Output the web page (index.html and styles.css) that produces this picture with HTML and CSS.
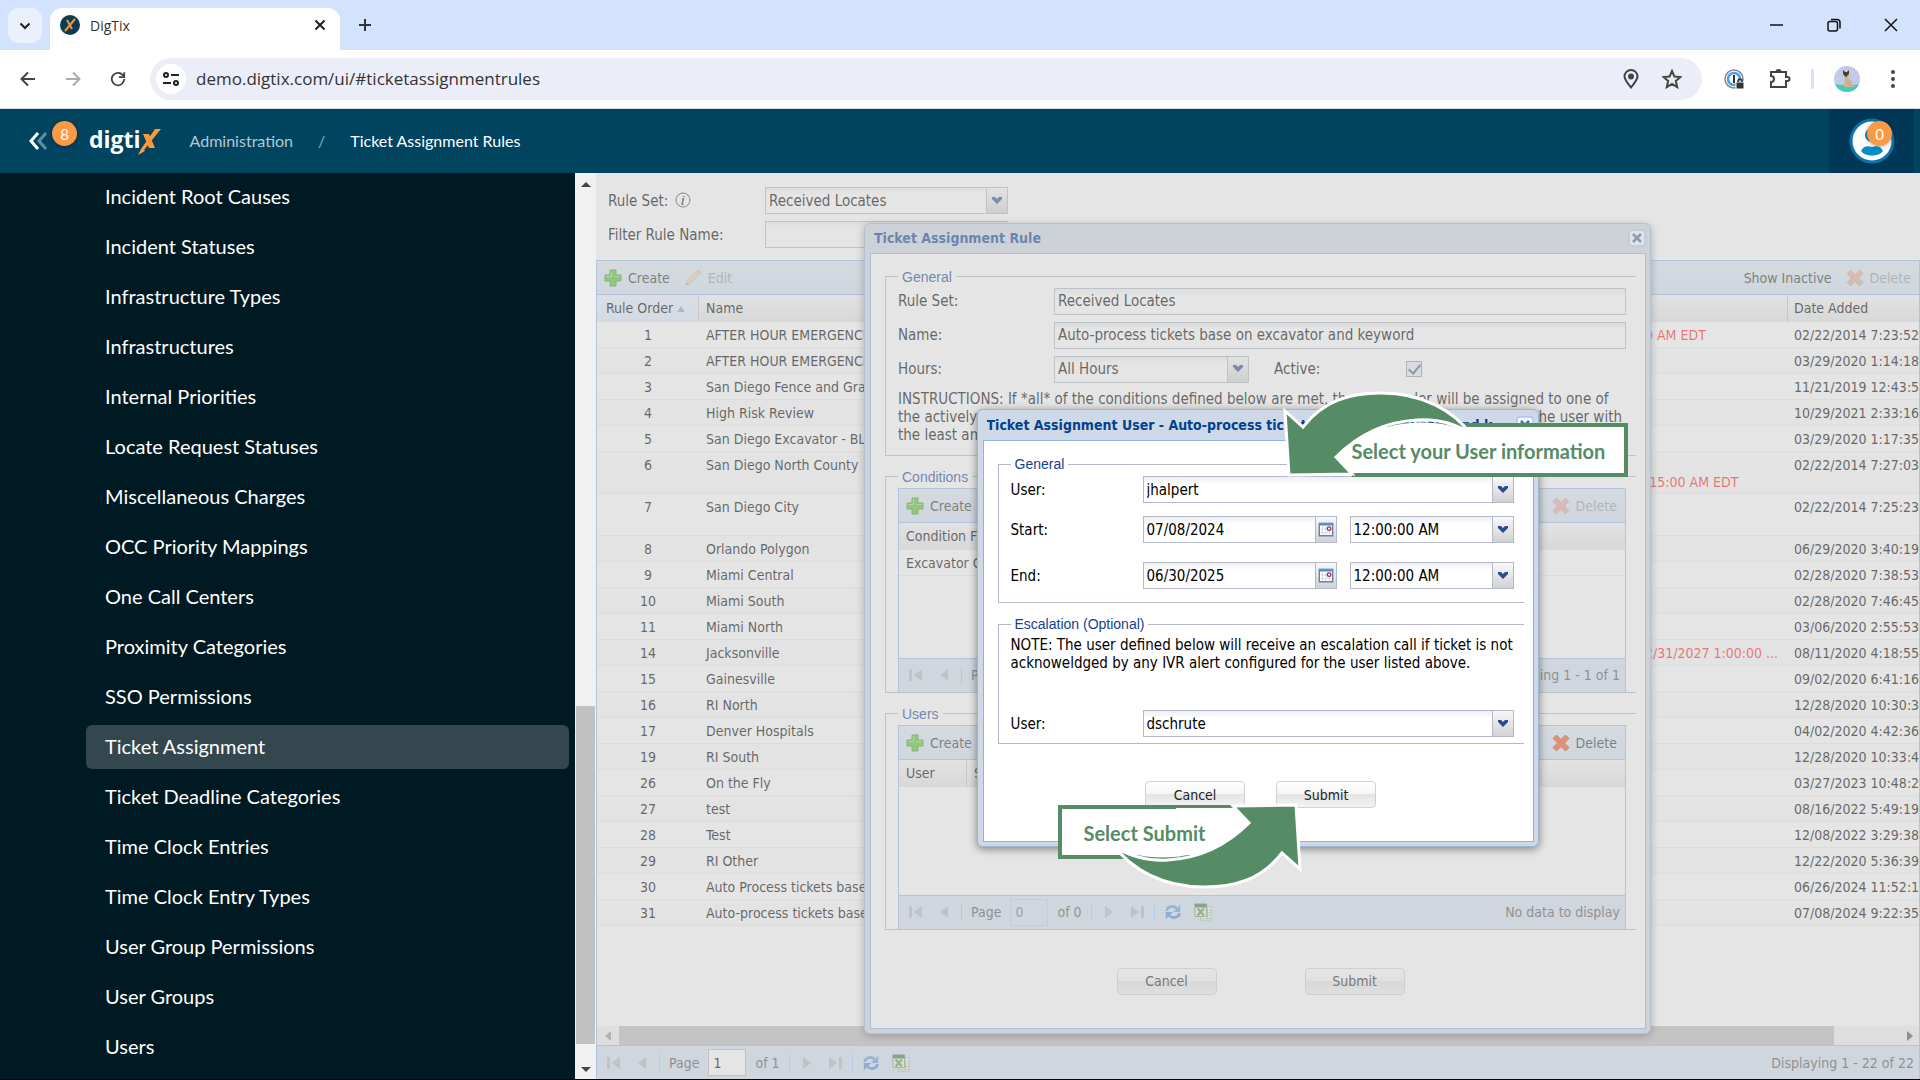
FILE: index.html
```html
<!DOCTYPE html>
<html lang="en">
<head>
  <meta charset="UTF-8" />
  <title>DigTix</title>
  <meta name="viewport" content="width=device-width, initial-scale=1.0" />
  <link rel="stylesheet" href="styles.css">
</head>
<body>
  <!-- icon sprite -->
  <svg class="sprite" aria-hidden="true">
    <symbol id="i-plus" viewBox="0 0 18 18"><path d="M6 1h6v5h5v6h-5v5H6v-5H1V6h5z" fill="#5cc22f" stroke="#3a9d2a" stroke-width="1"/><path d="M7.500 2.500v5h-5M10.500 7.500h5" stroke="#9be27a" fill="none"/></symbol>
    <symbol id="i-cross" viewBox="0 0 18 18"><path d="M4.500 1L9 5.500 13.500 1 17 4.500 12.500 9l4.500 4.500-3.500 3.500L9 12.500 4.500 17 1 13.500 5.500 9 1 4.500z" fill="#f0561b" stroke="#c94a2a" stroke-linejoin="round"/></symbol>
    <symbol id="i-pencil" viewBox="0 0 20 20"><path d="M2 18l2-6L14 2l4 3L7 16z" fill="#f1b850" stroke="#b98a4a"/><path d="M14 2l2-1 3 2-1 2z" fill="#e0483a"/><path d="M2 18l1-3 2 2z" fill="#444"/></symbol>
    <symbol id="i-first" viewBox="0 0 16 16"><path d="M1 2h3v12H1zM14 2v12L6 8z"/></symbol>
    <symbol id="i-prev" viewBox="0 0 16 16"><path d="M12 2v12L4 8z"/></symbol>
    <symbol id="i-next" viewBox="0 0 16 16"><path d="M4 2v12l8-6z"/></symbol>
    <symbol id="i-last" viewBox="0 0 16 16"><path d="M12 2h3v12h-3zM2 2v12l8-6z"/></symbol>
    <symbol id="i-refresh" viewBox="0 0 20 20"><path d="M3 9c0-5 7-7 11-3" fill="none" stroke="#5a9fe0" stroke-width="3"/><path d="M18 2v8h-8z" fill="#5a9fe0"/><path d="M17 11c0 5-7 7-11 3" fill="none" stroke="#4a90d8" stroke-width="3"/><path d="M2 18v-8h8z" fill="#4a90d8"/></symbol>
    <symbol id="i-excel" viewBox="0 0 20 20"><path d="M7 4h12v15H7z" fill="#fff" stroke="#9ab898"/><path d="M8 14h10M8 17h10M15 5v13M16 8h3M16 11h3" stroke="#8fb98c"/><path d="M1 1h13v14H1z" fill="#e4efe0" stroke="#6a9a66"/><path d="M1 1h13v4H1z" fill="#4a7a48"/><path d="M4 6l7 8M11 6l-7 8" stroke="#5c9a55" stroke-width="2.500"/></symbol>
    <symbol id="i-chev" viewBox="0 0 12 10"><path d="M1 1h3l2 2 2-2h3v2L6 8 1 3z" fill="#2b4a8f"/></symbol>
    <symbol id="i-cal" viewBox="0 0 18 18"><path d="M1.500 1.500h15v14h-15z" fill="#fff" stroke="#5a7fb5" stroke-width="1.500"/><path d="M1 1h16v3H1z" fill="#5a8fd0"/><path d="M3 8h11M3 12h11M5 5v10M9 5v10M13 9v6" stroke="#ccd4de"/><circle cx="12.500" cy="7.500" r="2" fill="#fff" stroke="#b3262a" stroke-width="1.500"/></symbol>
    <symbol id="i-x" viewBox="0 0 18 18"><rect x="1" y="1" width="16" height="16" rx="3" fill="#f4f8fd" stroke="#a9c6ee" stroke-width="1.500"/><path d="M5 5l8 8M13 5l-8 8" stroke="#4a68ab" stroke-width="2.500"/></symbol>
    <!-- curved pointer used by both callouts -->
    <symbol id="i-arrow" viewBox="0 0 200 90" overflow="visible">
      <path d="M191 29C165 14 98 10 57 53L73 68H130V32z" fill="#fff"/>
      <path d="M6 7L24 23C45-4 72-11 102-11C145-11 175 8 191 29C172 17 155 15 138 16C100 18 75 35 57 53L73 70L10 71z" fill="#558b65" stroke="#fff" stroke-width="3"/>
    </symbol>
  </svg>

  <div class="tabstrip">
    <button class="tab-search" aria-label="Search tabs"><svg width="12" height="8" viewBox="0 0 12 8"><path d="M1.500 1.500L6 6l4.500-4.500" fill="none" stroke="#1f1f1f" stroke-width="2"/></svg></button>
    <div class="tab">
      <svg class="favicon" width="20" height="20" viewBox="0 0 20 20"><circle cx="10" cy="10" r="10" fill="#0b3c55"/><path d="M15 4L5 16M7 5l5 9" stroke="#f7953a" stroke-width="2" fill="none"/></svg>
      <span class="tab-title">DigTix</span>
      <button class="tab-close" aria-label="Close tab"><svg width="12" height="12" viewBox="0 0 12 12"><path d="M1.500 1.500l9 9M10.500 1.500l-9 9" stroke="#1f1f1f" stroke-width="2"/></svg></button>
    </div>
    <button class="new-tab" aria-label="New tab"><svg width="14" height="14" viewBox="0 0 14 14"><path d="M7 1v12M1 7h12" stroke="#333" stroke-width="2"/></svg></button>
    <div class="win-controls">
      <button aria-label="Minimize"><svg width="14" height="14" viewBox="0 0 14 14"><path d="M0 7h13" stroke="#111" stroke-width="1.500"/></svg></button>
      <button aria-label="Restore"><svg width="14" height="14" viewBox="0 0 14 14" fill="none" stroke="#111" stroke-width="1.500"><rect x="1" y="3.500" width="9.500" height="9.500" rx="2"/><path d="M4 1.500h6a3 3 0 0 1 3 3v6"/></svg></button>
      <button aria-label="Close"><svg width="14" height="14" viewBox="0 0 14 14"><path d="M1 1l12 12M13 1L1 13" stroke="#111" stroke-width="1.500"/></svg></button>
    </div>
  </div>

  <div class="navbar">
    <button class="nav-btn" aria-label="Back"><svg width="16" height="16" viewBox="0 0 16 16" fill="none" stroke="#444" stroke-width="2"><path d="M15 8H2M8 1.500L1.500 8 8 14.500"/></svg></button>
    <button class="nav-btn" aria-label="Forward"><svg width="16" height="16" viewBox="0 0 16 16" fill="none" stroke="#aaa" stroke-width="2"><path d="M1 8h13M8 1.500L14.500 8 8 14.500"/></svg></button>
    <button class="nav-btn" aria-label="Reload"><svg width="16" height="16" viewBox="0 0 18 18" fill="none" stroke="#444" stroke-width="2"><path d="M15 5.500A7 7 0 1 0 16 9M16 1.500V7h-6"/></svg></button>
    <div class="address">
      <button class="site-info" aria-label="Site information"><svg width="16" height="14" viewBox="0 0 16 14" fill="none" stroke="#222" stroke-width="2"><circle cx="3" cy="3" r="2"/><path d="M8 3h8M0 11h8"/><circle cx="13" cy="11" r="2"/></svg></button>
      <input class="url" type="text" aria-label="Address" value="demo.digtix.com/ui/#ticketassignmentrules">
      <button class="nav-icon" aria-label="Location"><svg width="16" height="20" viewBox="0 0 16 20" fill="none" stroke="#444" stroke-width="2"><path d="M8 18.500C4 13.500 1.500 10.500 1.500 7.500a6.500 6.500 0 0 1 13 0c0 3-2.500 6-6.500 11z"/><circle cx="8" cy="7.500" r="2" fill="#444"/></svg></button>
      <button class="nav-icon" aria-label="Bookmark"><svg width="20" height="20" viewBox="0 0 20 20" fill="none" stroke="#444" stroke-width="2"><path d="M10 2l2.400 5.600 6 .5-4.600 4 1.400 6L10 15l-5.200 3.100 1.400-6-4.600-4 6-.5z"/></svg></button>
    </div>
    <button class="nav-icon" aria-label="Password manager"><svg width="22" height="22" viewBox="0 0 22 22" fill="none"><circle cx="10" cy="11" r="9" stroke="#888" stroke-width="1.500"/><circle cx="10" cy="11" r="6" stroke="#4a9df5" stroke-width="2.500"/><path d="M10 7v8" stroke="#333" stroke-width="2"/><path d="M12 14h8v7h-8z" fill="#333" stroke="#fff"/><path d="M14 14v-1a2 2 0 0 1 4 0v1" stroke="#333" stroke-width="1.500"/></svg></button>
    <button class="nav-icon" aria-label="Extensions"><svg width="22" height="22" viewBox="0 0 22 22" fill="none" stroke="#444" stroke-width="2"><path d="M2 4h15v5h1.500a1.500 1.500 0 0 1 0 4H17v6H2v-5c4 0 4-6 0-6z"/><path d="M7.500 4a2 2 0 0 1 4 0z" fill="#444"/></svg></button>
    <span class="nav-sep"></span>
    <button class="nav-icon" aria-label="Profile"><svg width="26" height="26" viewBox="0 0 26 26"><circle cx="13" cy="13" r="13" fill="#c3cae6"/><path d="M1 18a13 13 0 0 0 24 0c-7 2-17 1-24 0z" fill="#45cbb9"/><path d="M9 4l2 2h2l2-2v5l-1 3c3 1 4 4 4 7l4 2H10l1-8-2-5z" fill="#cbb28d"/><path d="M9 4l2 2h2l2-2v4l-3 3-3-3z" fill="#4b3b38"/></svg></button>
    <button class="nav-icon menu" aria-label="Menu"><svg width="6" height="20" viewBox="0 0 6 20" fill="#444"><circle cx="3" cy="3" r="2"/><circle cx="3" cy="10" r="2"/><circle cx="3" cy="17" r="2"/></svg></button>
  </div>

  <header class="app-header">
    <button class="collapse" aria-label="Collapse menu"><svg width="20" height="20" viewBox="0 0 20 20" fill="none" stroke-width="3"><path d="M18 2l-7 8 7 8" stroke="#5f8fa5"/><path d="M10 2l-7 8 7 8" stroke="#fff"/></svg><span class="badge">8</span></button>
    <a class="logo" href="#">digti<svg width="25" height="32" viewBox="0 0 25 32"><path d="M24 6h-6L4 26l-3 6 7-4-1-1z" fill="#fb9a3c"/><path d="M6 11h6l6 14h-6z" fill="#fb9a3c"/></svg></a>
    <nav class="crumbs">
      <a href="#">Administration</a>
      <span class="slash">/</span>
      <span>Ticket Assignment Rules</span>
    </nav>
    <button class="account" aria-label="Account"><svg width="46" height="46" viewBox="0 0 46 46"><circle cx="23" cy="23" r="21" fill="#fff" stroke="#0a74a8" stroke-width="3"/><circle cx="23" cy="17" r="7" fill="#0a8cc8"/><path d="M12 33c3-6 7-5 11-4 4-1 8-2 11 4-4 6-18 6-22 0z" fill="#0a8cc8"/></svg><span class="badge">0</span></button>
  </header>

  <div class="main">
    <ul class="side">
      <li><a href="#">Incident Root Causes</a></li>
      <li><a href="#">Incident Statuses</a></li>
      <li><a href="#">Infrastructure Types</a></li>
      <li><a href="#">Infrastructures</a></li>
      <li><a href="#">Internal Priorities</a></li>
      <li><a href="#">Locate Request Statuses</a></li>
      <li><a href="#">Miscellaneous Charges</a></li>
      <li><a href="#">OCC Priority Mappings</a></li>
      <li><a href="#">One Call Centers</a></li>
      <li><a href="#">Proximity Categories</a></li>
      <li><a href="#">SSO Permissions</a></li>
      <li><a href="#" class="active">Ticket Assignment</a></li>
      <li><a href="#">Ticket Deadline Categories</a></li>
      <li><a href="#">Time Clock Entries</a></li>
      <li><a href="#">Time Clock Entry Types</a></li>
      <li><a href="#">User Group Permissions</a></li>
      <li><a href="#">User Groups</a></li>
      <li><a href="#">Users</a></li>
    </ul>
    <div class="vscroll"><span class="up"></span><span class="thumb"></span><span class="down"></span></div>

    <div class="content">
      <div class="filters">
        <div class="field">
          <label for="ruleset">Rule Set: <svg class="info" width="16" height="16" viewBox="0 0 16 16"><circle cx="8" cy="8" r="7" fill="none" stroke="#444"/><path d="M9 4v1M7 7h1.500L7 12h1.500" stroke="#333" stroke-width="1.500" fill="none"/></svg></label>
          <span class="combo"><select id="ruleset"><option>Received Locates</option></select><span class="trigger"><svg width="12" height="10"><use href="#i-chev"/></svg></span></span>
        </div>
        <div class="field">
          <label for="rulename">Filter Rule Name:</label>
          <input class="text" id="rulename" type="text">
        </div>
      </div>

      <div class="grid main-grid">
        <div class="toolbar">
          <button><svg width="18" height="18"><use href="#i-plus"/></svg>Create</button>
          <button disabled><svg width="18" height="18"><use href="#i-pencil"/></svg>Edit</button>
          <span class="fill"></span>
          <button>Show Inactive</button>
          <button disabled><svg width="18" height="18"><use href="#i-cross"/></svg>Delete</button>
        </div>
        <table class="rules">
          <colgroup><col class="c-order"><col><col class="c-sched"><col class="c-date"></colgroup>
          <thead><tr><th class="sorted">Rule Order <svg width="8" height="6" viewBox="0 0 8 6"><path d="M0 6l4-6 4 6z" fill="#86a5d8"/></svg></th><th>Name</th><th></th><th>Date Added</th></tr></thead>
          <tbody>
            <tr><td>1</td><td>AFTER HOUR EMERGENCIES</td><td class="late">0 AM EDT</td><td>02/22/2014 7:23:52</td></tr>
            <tr><td>2</td><td>AFTER HOUR EMERGENCIES</td><td></td><td>03/29/2020 1:14:18</td></tr>
            <tr><td>3</td><td>San Diego Fence and Grading</td><td></td><td>11/21/2019 12:43:5</td></tr>
            <tr><td>4</td><td>High Risk Review</td><td></td><td>10/29/2021 2:33:16</td></tr>
            <tr><td>5</td><td>San Diego Excavator - BLUE</td><td></td><td>03/29/2020 1:17:35</td></tr>
            <tr class="tall"><td>6</td><td>San Diego North County</td><td class="late"><br>:15:00 AM EDT</td><td>02/22/2014 7:27:03</td></tr>
            <tr class="tall"><td>7</td><td>San Diego City</td><td></td><td>02/22/2014 7:25:23</td></tr>
            <tr><td>8</td><td>Orlando Polygon</td><td></td><td>06/29/2020 3:40:19</td></tr>
            <tr><td>9</td><td>Miami Central</td><td></td><td>02/28/2020 7:38:53</td></tr>
            <tr><td>10</td><td>Miami South</td><td></td><td>02/28/2020 7:46:45</td></tr>
            <tr><td>11</td><td>Miami North</td><td></td><td>03/06/2020 2:55:53</td></tr>
            <tr><td>14</td><td>Jacksonville</td><td class="late">2/31/2027 1:00:00 ...</td><td>08/11/2020 4:18:55</td></tr>
            <tr><td>15</td><td>Gainesville</td><td></td><td>09/02/2020 6:41:16</td></tr>
            <tr><td>16</td><td>RI North</td><td></td><td>12/28/2020 10:30:3</td></tr>
            <tr><td>17</td><td>Denver Hospitals</td><td></td><td>04/02/2020 4:42:36</td></tr>
            <tr><td>19</td><td>RI South</td><td></td><td>12/28/2020 10:33:4</td></tr>
            <tr><td>26</td><td>On the Fly</td><td></td><td>03/27/2023 10:48:2</td></tr>
            <tr><td>27</td><td>test</td><td></td><td>08/16/2022 5:49:19</td></tr>
            <tr><td>28</td><td>Test</td><td></td><td>12/08/2022 3:29:38</td></tr>
            <tr><td>29</td><td>RI Other</td><td></td><td>12/22/2020 5:36:39</td></tr>
            <tr><td>30</td><td>Auto Process tickets based</td><td></td><td>06/26/2024 11:52:1</td></tr>
            <tr><td>31</td><td>Auto-process tickets base</td><td></td><td>07/08/2024 9:22:35</td></tr>
          </tbody>
        </table>
        <span class="fill"></span>
        <div class="hscroll"><span class="left"></span><span class="thumb"></span><span class="right"></span></div>
        <div class="pager">
          <svg width="16" height="16"><use href="#i-first"/></svg>
          <svg width="16" height="16"><use href="#i-prev"/></svg>
          <i></i><label for="page1">Page</label><input id="page1" type="text" value="1"><span class="of">of 1</span><i></i>
          <svg width="16" height="16"><use href="#i-next"/></svg>
          <svg width="16" height="16"><use href="#i-last"/></svg>
          <i></i>
          <svg width="18" height="18"><use href="#i-refresh"/></svg>
          <svg width="18" height="18"><use href="#i-excel"/></svg>
          <span class="fill"></span><span>Displaying 1 - 22 of 22</span>
        </div>
      </div>

      <!-- rule window -->
      <div class="overlay">
        <div class="window rule-window">
          <div class="win-title"><span>Ticket Assignment Rule</span><button aria-label="Close"><svg width="18" height="18"><use href="#i-x"/></svg></button></div>
          <div class="win-body">
            <fieldset>
              <legend>General</legend>
              <div class="field"><label for="r-set">Rule Set:</label><input class="text grow" id="r-set" type="text" value="Received Locates"></div>
              <div class="field"><label for="r-name">Name:</label><input class="text grow" id="r-name" type="text" value="Auto-process tickets base on excavator and keyword"></div>
              <div class="field">
                <label for="r-hours">Hours:</label>
                <span class="combo hours"><select id="r-hours"><option>All Hours</option></select><span class="trigger"><svg width="12" height="10"><use href="#i-chev"/></svg></span></span>
                <label class="active-label" for="r-active">Active:</label>
                <input type="checkbox" id="r-active" checked>
              </div>
              <div class="instructions">
                <p>INSTRUCTIONS: If *all* of the conditions defined below are met, the work order will be assigned to one of</p>
                <p><span>the actively</span><span>the user with</span></p>
                <p>the least amount</p>
              </div>
            </fieldset>
            <fieldset>
              <legend>Conditions</legend>
              <div class="grid">
                <div class="toolbar"><button><svg width="18" height="18"><use href="#i-plus"/></svg>Create</button><span class="fill"></span><button disabled><svg width="18" height="18"><use href="#i-cross"/></svg>Delete</button></div>
                <table><thead><tr><th>Condition Field</th></tr></thead><tbody><tr><td>Excavator Company</td></tr></tbody></table>
                <span class="fill"></span>
                <div class="pager">
                  <svg width="16" height="16"><use href="#i-first"/></svg>
                  <svg width="16" height="16"><use href="#i-prev"/></svg>
                  <i></i><span>Page</span>
                  <span class="fill"></span><span>Displaying 1 - 1 of 1</span>
                </div>
              </div>
            </fieldset>
            <fieldset>
              <legend>Users</legend>
              <div class="grid">
                <div class="toolbar"><button><svg width="18" height="18"><use href="#i-plus"/></svg>Create</button><span class="fill"></span><button><svg width="18" height="18"><use href="#i-cross"/></svg>Delete</button></div>
                <table><colgroup><col class="c-user"><col></colgroup><thead><tr><th>User</th><th>Start</th></tr></thead></table>
                <span class="fill"></span>
                <div class="pager">
                  <svg width="16" height="16"><use href="#i-first"/></svg>
                  <svg width="16" height="16"><use href="#i-prev"/></svg>
                  <i></i><label for="page2">Page</label><input id="page2" type="text" value="0" disabled><span class="of">of 0</span><i></i>
                  <svg width="16" height="16"><use href="#i-next"/></svg>
                  <svg width="16" height="16"><use href="#i-last"/></svg>
                  <i></i>
                  <svg width="18" height="18"><use href="#i-refresh"/></svg>
                  <svg width="18" height="18"><use href="#i-excel"/></svg>
                  <span class="fill"></span><span>No data to display</span>
                </div>
              </div>
            </fieldset>
            <div class="actions wide"><button>Cancel</button><button>Submit</button></div>
          </div>
        </div>
      </div>

      <!-- user window, masks everything below it -->
      <div class="overlay mask">
        <div class="window user-window">
          <div class="win-title"><span>Ticket Assignment User - Auto-process tickets base on excavator and keyword</span><button aria-label="Close"><svg width="18" height="18"><use href="#i-x"/></svg></button></div>
          <div class="win-body">
            <fieldset>
              <legend>General</legend>
              <div class="field"><label for="u-user">User:</label><span class="combo grow"><select id="u-user"><option>jhalpert</option></select><span class="trigger"><svg width="12" height="10"><use href="#i-chev"/></svg></span></span></div>
              <div class="field start">
                <label for="u-start">Start:</label>
                <span class="combo date"><input id="u-start" type="text" value="07/08/2024"><button class="trigger" aria-label="Pick start date"><svg width="16" height="16"><use href="#i-cal"/></svg></button></span>
                <span class="combo grow"><select aria-label="Start time"><option>12:00:00 AM</option></select><span class="trigger"><svg width="12" height="10"><use href="#i-chev"/></svg></span></span>
              </div>
              <div class="field end">
                <label for="u-end">End:</label>
                <span class="combo date"><input id="u-end" type="text" value="06/30/2025"><button class="trigger" aria-label="Pick end date"><svg width="16" height="16"><use href="#i-cal"/></svg></button></span>
                <span class="combo grow"><select aria-label="End time"><option>12:00:00 AM</option></select><span class="trigger"><svg width="12" height="10"><use href="#i-chev"/></svg></span></span>
              </div>
            </fieldset>
            <fieldset class="escalation">
              <legend>Escalation (Optional)</legend>
              <p>NOTE: The user defined below will receive an escalation call if ticket is not<br>acknoweldged by any IVR alert configured for the user listed above.</p>
              <div class="field"><label for="u-esc">User:</label><span class="combo grow"><select id="u-esc"><option>dschrute</option></select><span class="trigger"><svg width="12" height="10"><use href="#i-chev"/></svg></span></span></div>
            </fieldset>
            <div class="actions"><button>Cancel</button><button>Submit</button></div>
          </div>

          <div class="callout callout-user"><svg width="200" height="90"><use href="#i-arrow"/></svg><span>Select your User information</span></div>
          <div class="callout callout-submit"><svg width="200" height="90"><use href="#i-arrow"/></svg><span>Select Submit</span></div>
        </div>
      </div>
    </div>
  </div>
</body>
</html>
```
FILE: styles.css
```css
* {
  box-sizing: border-box;
}

body {
  margin: 0;
  height: 100vh;
  display: flex;
  flex-direction: column;
  overflow: hidden;
  border-bottom: 1px solid #000a10;
  font-family: "DejaVu Sans Condensed", "Noto Sans", sans-serif;
  font-size: 15px;
  color: #000;
}

button,
input,
select {
  font: inherit;
  color: inherit;
  margin: 0;
  padding: 0;
  border: 0;
  background: none;
  outline: 0;
}

svg {
  display: block;
  flex: none;
}

p {
  margin: 0;
}

a {
  color: inherit;
  text-decoration: none;
}

.sprite {
  position: absolute;
  width: 0;
  height: 0;
}

.fill {
  flex: 1;
}

/* browser */
.tabstrip {
  display: flex;
  flex: none;
  height: 50px;
  background: #d3e3fd;
  font-family: "Open Sans", sans-serif;
  font-size: 14px;
}

.tab-search {
  display: grid;
  place-items: center;
  width: 34px;
  height: 35px;
  margin: 8px 8px 0;
  border-radius: 11px;
  background: #eaf1fd;
}

.tab {
  display: flex;
  align-items: center;
  width: 290px;
  margin-top: 8px;
  padding: 0 14px 8px 10px;
  border-radius: 12px 12px 0 0;
  background: #fff;
}

.tab-title {
  flex: 1;
  margin-left: 10px;
  color: #333;
}

.new-tab {
  height: 50px;
  margin-left: 18px;
}

.win-controls {
  display: flex;
  gap: 43px;
  margin-left: auto;
  padding-right: 22px;
}

.navbar {
  display: flex;
  align-items: center;
  flex: none;
  height: 59px;
  padding: 0 24px 1px 20px;
  background: #fff;
  border-bottom: 1px solid #d5dde0;
}

.nav-btn {
  width: 16px;
  margin-right: 29px;
}

.address {
  display: flex;
  align-items: center;
  flex: 1;
  height: 42px;
  margin-left: -5px;
  margin-right: 22px;
  padding: 0 20px 0 6px;
  border-radius: 21px;
  background: #ebeef8;
  font-family: "Open Sans", sans-serif;
  font-size: 17px;
  color: #333;
}

.address .nav-icon {
  margin-left: 21px;
}

.site-info {
  display: grid;
  place-items: center;
  width: 30px;
  height: 30px;
  border-radius: 50%;
  background: #fff;
}

.url {
  flex: 1;
  margin-left: 10px;
}

.nav-icon + .nav-icon {
  margin-left: 23px;
}

.nav-sep {
  width: 3px;
  height: 20px;
  margin: 0 20px;
  background: #d3e3fd;
}

.nav-icon + .menu {
  margin-left: 30px;
}

/* app header */
.app-header {
  display: flex;
  align-items: center;
  flex: none;
  height: 64px;
  padding-left: 28px;
  background: #00445f;
  color: #fff;
  font-family: Lato, sans-serif;
  font-size: 16px;
}

.collapse,
.account {
  position: relative;
}

.badge {
  position: absolute;
  display: grid;
  place-items: center;
  width: 25px;
  height: 25px;
  border-radius: 50%;
  background: #fb9a45;
  box-shadow: 0 1px 4px rgba(0, 0, 0, .3);
  color: #fff;
  font-size: 15px;
}

.collapse .badge {
  left: 24px;
  top: -10px;
}

.logo {
  display: flex;
  align-items: center;
  margin-left: 41px;
  padding-bottom: 4px;
  font-family: "Open Sans", sans-serif;
  font-size: 23px;
  font-weight: 700;
  line-height: 32px;
}

.logo svg {
  margin-left: -4px;
}

.crumbs {
  display: flex;
  flex: 1;
  margin-left: 28px;
  padding-bottom: 2px;
}

.crumbs a {
  color: #b4c8d2;
}

.crumbs .slash {
  margin: 0 25px;
  color: #6fb4da;
}

.account {
  display: grid;
  place-items: center;
  width: 85px;
  height: 64px;
  margin-right: 6px;
  background: #003756;
}

.account .badge {
  left: 38px;
  top: 12px;
}

/* side menu */
.main {
  display: flex;
  flex: 1;
  min-height: 0;
}

.side {
  width: 575px;
  margin: 0;
  padding: 2px 6px 0 86px;
  list-style: none;
  background: #001a23;
  color: #fff;
  font-family: Lato, sans-serif;
  font-size: 20px;
  overflow: hidden;
}

.side a {
  display: block;
  height: 44px;
  margin-bottom: 6px;
  padding-left: 19px;
  border-radius: 6px;
  line-height: 43px;
}

.side .active {
  background: #34474e;
}

.vscroll {
  display: flex;
  flex-direction: column;
  align-items: center;
  width: 21px;
  padding: 9px 0 7px;
  background: #f1f1f1;
}

.vscroll .thumb {
  width: 19px;
  height: 338px;
  margin-top: auto;
  margin-bottom: 23px;
  background: #c1c1c1;
}

.up,
.down {
  border: 5px solid transparent;
  border-top: 0;
  border-bottom: 5px solid #444;
}

.down {
  border-bottom: 0;
  border-top: 5px solid #444;
}

/* content */
.content {
  position: relative;
  display: flex;
  flex-direction: column;
  flex: 1;
  min-width: 0;
  overflow: hidden;
  background: #fff;
}

.filters {
  padding: 14px 13px 5px 12px;
}

.field {
  display: flex;
  align-items: center;
  margin-bottom: 7px;
}

.field label {
  display: flex;
  gap: 7px;
  width: 156px;
}

.filters label {
  width: 157px;
}

.combo,
.text {
  display: flex;
  width: 243px;
  height: 27px;
  border: 1px solid #b5b8c8;
  background: linear-gradient(#eceff0, #fff 7px);
}

.text {
  padding: 0 3px;
}

.combo select,
.combo input {
  flex: 1;
  min-width: 0;
  padding: 0 3px;
  appearance: none;
}

.combo.hours {
  width: 195px;
}

.trigger {
  display: grid;
  place-items: center;
  width: 21px;
  border-left: 1px solid #b5b8c8;
  background: linear-gradient(#f8f8f8, #d2d2d4);
}

.combo.grow,
.text.grow {
  flex: 1;
}

/* grids */
.grid {
  display: flex;
  flex-direction: column;
  height: 204px;
  border: 1px solid #99bce8;
  border-bottom: 0;
  font-size: 14px;
}

.main-grid {
  flex: 1;
  min-height: 0;
}

.toolbar {
  display: flex;
  align-items: center;
  flex: none;
  gap: 14px;
  height: 34px;
  padding: 1px 8px 0 7px;
  border-bottom: 1px solid #99bce8;
  background: linear-gradient(#dfe9f5, #d3e1f1);
  color: #333;
}

.toolbar button {
  display: flex;
  align-items: center;
  gap: 6px;
}

.toolbar button:disabled {
  opacity: .4;
}

table {
  width: 100%;
  table-layout: fixed;
  border-collapse: separate;
  border-spacing: 0;
}

th,
td {
  height: 26px;
  padding: 1px 7px 0;
  text-align: left;
  white-space: nowrap;
  overflow: hidden;
}

th {
  height: 27px;
  padding-top: 0;
  padding-bottom: 1px;
  font-weight: 400;
  border-right: 1px solid #c5c5c5;
  background: linear-gradient(#f9f9f9, #e3e4e6);
}

th:last-child {
  border-right: 0;
}

.sorted {
  background: linear-gradient(#ebf3fd, #d9e8fb);
}

.sorted svg {
  display: inline-block;
  vertical-align: middle;
}

td {
  border-bottom: 1px solid #ededed;
}

tr:nth-child(even) td {
  background: #fafafa;
}

.rules th:first-child {
  padding-left: 9px;
  padding-right: 0;
}

.rules td:first-child {
  text-align: center;
}

.rules th:nth-child(3) {
  padding: 0;
}

.rules th:nth-child(4),
.rules td:nth-child(4) {
  padding-left: 6px;
  padding-right: 0;
}

.rules .tall td {
  height: 42px;
  padding-top: 5px;
  vertical-align: top;
  line-height: 17px;
}

.rules .late {
  padding-left: 5px;
  padding-right: 0;
  color: #ff1e1e;
}

.c-order {
  width: 102px;
}

.c-sched {
  width: 148px;
}

.c-date {
  width: 131px;
}

.c-user {
  width: 68px;
}

.hscroll {
  display: flex;
  align-items: center;
  flex: none;
  height: 19px;
  padding: 0 6px 0 8px;
  background: #f1f1f1;
}

.hscroll .thumb {
  flex: 1;
  height: 19px;
  margin: 0 73px 0 8px;
  background: #bcbcbc;
}

.left,
.right {
  border: 5px solid transparent;
  border-left: 0;
  border-right: 6px solid #999;
}

.right {
  border-right: 0;
  border-left: 6px solid #555;
}

.pager {
  display: flex;
  align-items: center;
  flex: none;
  gap: 12px;
  height: 34px;
  padding: 0 5px 0 9px;
  border-top: 1px solid #99bce8;
  background: #d3e1f1;
  fill: #b4b8be;
}

.pager i {
  width: 1px;
  height: 17px;
  margin: 0 -3px;
  background: #98c8ff;
}

.pager label,
.pager span {
  color: #555;
}

.pager input {
  width: 38px;
  height: 27px;
  margin-left: -3px;
  padding: 0 4px;
  border: 1px solid #b5b8c8;
  background: #fff;
}

.pager input:disabled {
  background: none;
  opacity: .5;
}

.pager .of {
  margin-left: -3px;
}

/* windows */
.overlay {
  position: absolute;
  inset: 0;
  display: grid;
  place-items: center;
  padding: 4px 1px 0 0;
}

.mask {
  background: rgba(204, 204, 204, .5);
}

.window {
  position: relative;
  width: 787px;
  padding: 0 4px 4px 5px;
  border: 1px solid #a2b5d0;
  border-radius: 6px;
  background: #ced9e7;
  box-shadow: 0 2px 8px rgba(0, 0, 0, .45);
}

.user-window {
  width: 562px;
}

.win-title {
  display: flex;
  align-items: center;
  gap: 8px;
  height: 29px;
  padding-left: 4px;
  color: #04408c;
  font-size: 14px;
  font-weight: 700;
}

.win-title span {
  flex: 1;
  overflow: hidden;
  white-space: nowrap;
  text-overflow: ellipsis;
}

.win-body {
  padding: 14px 9px 0 14px;
  border: 1px solid #8db2e3;
  background: #fff;
}

fieldset {
  min-width: 0;
  margin: 0 0 12px;
  padding: 2px 10px 11px 12px;
  border: 1px solid #b5b8c8;
  border-right: 0;
}

fieldset:has(.grid) {
  padding-bottom: 0;
}

legend {
  padding: 0 4px;
  color: #15428b;
  font-family: "Liberation Sans", Arial, sans-serif;
  font-size: 14px;
  line-height: 18px;
}

.field .active-label {
  width: 132px;
  margin-left: 25px;
}

input[type="checkbox"] {
  display: grid;
  place-items: center;
  width: 16px;
  height: 16px;
  appearance: none;
  border: 1px solid #999;
  background: #e8ebf2;
}

input[type="checkbox"]:checked::before {
  content: "";
  width: 5px;
  height: 10px;
  margin-bottom: 3px;
  border: solid #3f5f9f;
  border-width: 0 2px 2px 0;
  transform: rotate(40deg);
}

.instructions,
.escalation p {
  line-height: 18px;
}

.instructions p {
  display: flex;
  justify-content: space-between;
  padding-right: 4px;
  white-space: nowrap;
}

.actions {
  display: flex;
  justify-content: center;
  gap: 31px;
  padding: 25px 0 33px;
  font-size: 14px;
}

.actions button {
  width: 100px;
  height: 27px;
  border: 1px solid #d1d1d1;
  border-radius: 4px;
  background: linear-gradient(#fff, #f5f5f5 50%, #e4e4e4 50%, #f3f3f3);
  color: #222;
}

.actions.wide {
  gap: 88px;
  padding: 26px 0 33px;
}

.user-window .win-title {
  height: 30px;
}

.user-window fieldset {
  padding-top: 3px;
}

.user-window fieldset .field {
  margin-bottom: 13px;
}

.user-window .field label {
  width: 132px;
}

.user-window .field.start {
  margin-bottom: 19px;
}

.user-window .field.end {
  margin-bottom: 2px;
}

.combo.date {
  width: 194px;
  margin-right: 13px;
}

.user-window .escalation {
  padding-bottom: 6px;
}

.escalation p {
  margin-bottom: 38px;
  white-space: nowrap;
}

.user-window .escalation .field {
  margin-bottom: 0;
}

/* callouts */
.callout {
  position: absolute;
  height: 54px;
  border: 4px solid #558b65;
  background: #fff;
  color: #558b65;
  font-family: Lato, sans-serif;
  font-size: 20px;
  font-weight: 700;
  line-height: 48px;
  white-space: nowrap;
}

.callout span {
  position: relative;
}

.callout svg {
  position: absolute;
  overflow: visible;
}

.callout-user {
  left: 374px;
  top: 13px;
  width: 276px;
  border-left: 0;
}

.callout-user svg {
  left: -73px;
  top: -23px;
}

.callout-submit {
  left: 80px;
  top: 395px;
  width: 176px;
  padding-left: 22px;
  border-right: 0;
}

.callout-submit svg {
  left: 44px;
  top: -23px;
  transform: rotate(180deg);
}
```
